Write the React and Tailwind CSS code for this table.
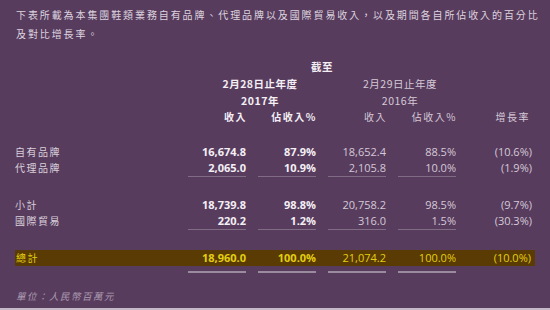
const rows = [
  { label: "自有品牌", a: "16,674.8", b: "87.9%", c: "18,652.4", d: "88.5%", g: "(10.6%)" },
  { label: "代理品牌", a: "2,065.0", b: "10.9%", c: "2,105.8", d: "10.0%", g: "(1.9%)" },
]

const rows2 = [
  { label: "小計", a: "18,739.8", b: "98.8%", c: "20,758.2", d: "98.5%", g: "(9.7%)" },
  { label: "國際貿易", a: "220.2", b: "1.2%", c: "316.0", d: "1.5%", g: "(30.3%)" },
]

const grid = "grid grid-cols-[161px_58px_58px_58px_58px_64px] gap-x-3"
const cjk = "font-['Noto_Sans_CJK_TC',sans-serif]"
const num = "font-['Open_Sans','Noto_Sans_CJK_TC',sans-serif] text-[11px]"

function DataRow({ row }) {
  return (
    <div className={`${grid} h-4 items-center leading-4`}>
      <div className={`${cjk} text-[10px] tracking-[1.5px] text-[#d9cfdb]`}>{row.label}</div>
      <div className={`${num} text-right font-bold text-[#f3eff4]`}>{row.a}</div>
      <div className={`${num} text-right font-bold text-[#f3eff4]`}>{row.b}</div>
      <div className={`${num} text-right text-[#d4c9d6]`}>{row.c}</div>
      <div className={`${num} text-right text-[#d4c9d6]`}>{row.d}</div>
      <div className={`${num} text-right text-[#d4c9d6]`}>{row.g}</div>
    </div>
  )
}

function Rule({ thick }) {
  const line = thick ? "h-[2px] bg-[#9a8c9e]" : "h-px bg-[#806d85]"
  return (
    <div className={grid}>
      <div />
      <div className={line} />
      <div className={line} />
      <div className={line} />
      <div className={line} />
      <div />
    </div>
  )
}

export default function App() {
  return (
    <div lang="zh-Hant-TW" className="flex h-[310px] w-[550px] flex-col overflow-hidden bg-[#583c5e]">
      <p className={`${cjk} pl-4 pt-[5px] text-[10px] leading-[19px] tracking-[1.9px] text-[#dcd3de]`}>
        下表所載為本集團鞋類業務自有品牌、代理品牌以及國際貿易收入，以及期間各自所佔收入的百分比及對比增長率。
      </p>

      <div className="mt-4 px-[15px]">
        <div className={`${grid} h-4 items-center leading-4`}>
          <div />
          <div className={`${cjk} col-span-4 text-center text-[10.5px] font-bold tracking-[0.5px] text-[#f3eff4]`}>截至</div>
        </div>
        <div className={`${grid} h-[17px] items-center leading-[17px]`}>
          <div />
          <div className={`${cjk} col-span-2 pl-4 text-center text-[10.5px] font-bold tracking-[0.5px] text-[#f3eff4]`}>
            2月28日止年度
          </div>
          <div className={`${cjk} col-span-2 pl-4 text-center text-[10.5px] tracking-[0.5px] text-[#d4c9d6]`}>
            2月29日止年度
          </div>
        </div>
        <div className={`${grid} h-[17px] items-center leading-[17px]`}>
          <div />
          <div className={`${cjk} col-span-2 pl-4 text-center text-[10.5px] font-bold tracking-[0.5px] text-[#f3eff4]`}>
            2017年
          </div>
          <div className={`${cjk} col-span-2 pl-4 text-center text-[10.5px] tracking-[0.5px] text-[#d4c9d6]`}>
            2016年
          </div>
        </div>
        <div className={`${grid} h-4 items-center leading-4 ${cjk} text-[10px] tracking-[1.5px]`}>
          <div />
          <div className="mr-[-1px] text-right font-bold text-[#f3eff4]">收入</div>
          <div className="mr-[-1px] text-right font-bold text-[#f3eff4]">佔收入%</div>
          <div className="mr-[-1px] text-right text-[#d4c9d6]">收入</div>
          <div className="mr-[-1px] text-right text-[#d4c9d6]">佔收入%</div>
          <div className="pr-[2px] text-right text-[#d4c9d6]">增長率</div>
        </div>

        <div className="mt-[19px]">
          {rows.map((row) => (
            <DataRow key={row.label} row={row} />
          ))}
        </div>
        <Rule />

        <div className="mt-5">
          {rows2.map((row) => (
            <DataRow key={row.label} row={row} />
          ))}
        </div>
        <Rule />

        <div className={`${grid} mt-5 h-4 items-center bg-[#5a3b03] leading-4 text-[#e3cf10]`}>
          <div className={`${cjk} pl-px text-[10px] tracking-[1.5px]`}>總計</div>
          <div className={`${num} text-right font-bold`}>18,960.0</div>
          <div className={`${num} text-right font-bold`}>100.0%</div>
          <div className={`${num} text-right`}>21,074.2</div>
          <div className={`${num} text-right`}>100.0%</div>
          <div className={`${num} pr-px text-right`}>(10.0%)</div>
        </div>
        <div className="mt-[5px]">
          <Rule thick />
        </div>

        <div className={`${cjk} mt-[15px] h-4 pl-px text-[9.5px] italic leading-4 tracking-[1.5px] text-[#ab9bb0]`}>
          單位：人民幣百萬元
        </div>
      </div>

      <div className="mt-auto h-[2px] bg-[#c3b9c7]" />
    </div>
  )
}
